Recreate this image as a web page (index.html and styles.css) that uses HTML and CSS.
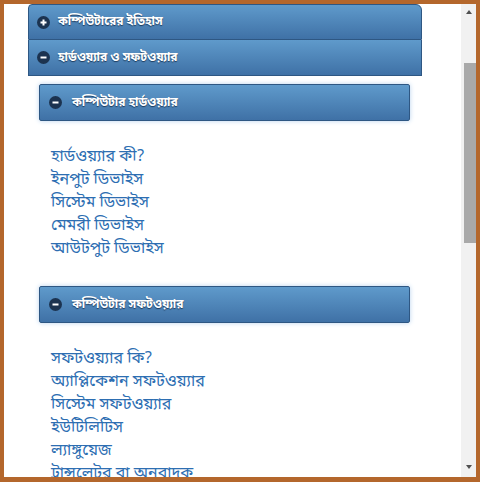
FILE: index.html
```html
<!DOCTYPE html>
<html lang="bn">
<head>
    <meta charset="UTF-8">
    <meta name="viewport" content="width=device-width, initial-scale=1.0">
    <title>কম্পিউটার</title>
    <link rel="stylesheet" href="styles.css">
</head>
<body>
    <div class="frame">
        <div class="content">
            <div class="accordion">
                <div class="acc-header first">
                    <svg class="icon" width="13" height="13" viewBox="0 0 13 13"><circle cx="6.5" cy="6.5" r="6.5" fill="#1c3350"/><path d="M3.5 6.5h6M6.5 3.5v6" stroke="#fff" stroke-width="2"/></svg>
                    <span>কম্পিউটারের ইতিহাস</span>
                </div>
                <div class="acc-header open">
                    <svg class="icon" width="13" height="13" viewBox="0 0 13 13"><circle cx="6.5" cy="6.5" r="6.5" fill="#1c3350"/><path d="M3.5 6.5h6" stroke="#fff" stroke-width="2"/></svg>
                    <span>হার্ডওয়্যার ও সফটওয়্যার</span>
                </div>
                <div class="acc-panel">
                    <div class="sub-header">
                        <svg class="icon" width="13" height="13" viewBox="0 0 13 13"><circle cx="6.5" cy="6.5" r="6.5" fill="#1c3350"/><path d="M3.5 6.5h6" stroke="#fff" stroke-width="2"/></svg>
                        <span>কম্পিউটার হার্ডওয়্যার</span>
                    </div>
                    <ul class="links">
                        <li><a href="#">হার্ডওয়্যার কী?</a></li>
                        <li><a href="#">ইনপুট ডিভাইস</a></li>
                        <li><a href="#">সিস্টেম ডিভাইস</a></li>
                        <li><a href="#">মেমরী ডিভাইস</a></li>
                        <li><a href="#">আউটপুট ডিভাইস</a></li>
                    </ul>
                    <div class="sub-header">
                        <svg class="icon" width="13" height="13" viewBox="0 0 13 13"><circle cx="6.5" cy="6.5" r="6.5" fill="#1c3350"/><path d="M3.5 6.5h6" stroke="#fff" stroke-width="2"/></svg>
                        <span>কম্পিউটার সফটওয়্যার</span>
                    </div>
                    <ul class="links">
                        <li><a href="#">সফটওয়্যার কি?</a></li>
                        <li><a href="#">অ্যাপ্লিকেশন সফটওয়্যার</a></li>
                        <li><a href="#">সিস্টেম সফটওয়্যার</a></li>
                        <li><a href="#">ইউটিলিটিস</a></li>
                        <li><a href="#">ল্যাঙ্গুয়েজ</a></li>
                        <li><a href="#">ট্রান্সলেটর বা অনুবাদক</a></li>
                    </ul>
                </div>
            </div>
        </div>

        <div class="scrollbar">
            <div class="arrow up"></div>
            <div class="thumb"></div>
            <div class="arrow down"></div>
        </div>
    </div>
</body>
</html>
```

FILE: styles.css
```css
body {
    margin: 0;
    font-family: "Noto Sans Bengali", "Noto Sans", sans-serif;
    background-color: #ffffff;
}

.frame {
    display: flex;
    height: 482px;
    border: 4px solid #b4672c;
    border-bottom-width: 5px;
    box-sizing: border-box;
}

.content {
    flex: 1;
    overflow: hidden;
}

/* fake scrollbar, list is scrolled a bit down */
.scrollbar {
    width: 15px;
    background-color: #f1f1f1;
    display: flex;
    flex-direction: column;
    align-items: flex-end;
}

.arrow {
    width: 0;
    height: 0;
    margin: 6px 4px 0 0;
    border-left: 3px solid transparent;
    border-right: 3px solid transparent;
}

.arrow.up {
    border-bottom: 4px solid #505050;
}

.arrow.down {
    margin-top: auto;
    margin-bottom: 8px;
    border-top: 4px solid #505050;
}

.thumb {
    width: 12px;
    height: 180px;
    margin-top: 49px;
    background-color: #a9a9a9;
}

.accordion {
    width: 394px;
    margin-left: 24px;
}

.acc-header,
.sub-header {
    display: flex;
    align-items: center;
    color: #ffffff;
    font-weight: bold;
    font-size: 12px;
    text-shadow: 0 1px 1px #1d3a5c;
    background: linear-gradient(#5f9acb, #3f71a6);
    border: 1px solid #2e5783;
}

.acc-header {
    height: 36px;
    box-sizing: border-box;
    padding-left: 8px;
    border-top: none;
}

.acc-header.first {
    border-top: 1px solid #2e5783;
    border-radius: 4px 6px 0 0;
}

.acc-header .icon {
    margin-right: 8px;
}

.acc-panel {
    padding: 8px 12px 0 11px;
}

.sub-header {
    height: 37px;
    box-sizing: border-box;
    padding-left: 9px;
    border-radius: 2px;
    box-shadow: 0 0 5px #b9d3ee;
}

.sub-header .icon {
    margin-right: 10px;
}

.links {
    list-style: none;
    margin: 0;
    padding: 25px 12px 25px 12px;
}

.links li {
    line-height: 23px;
    font-size: 16px;
}

.links a {
    color: #2d6eb2;
    text-decoration: none;
}
```
